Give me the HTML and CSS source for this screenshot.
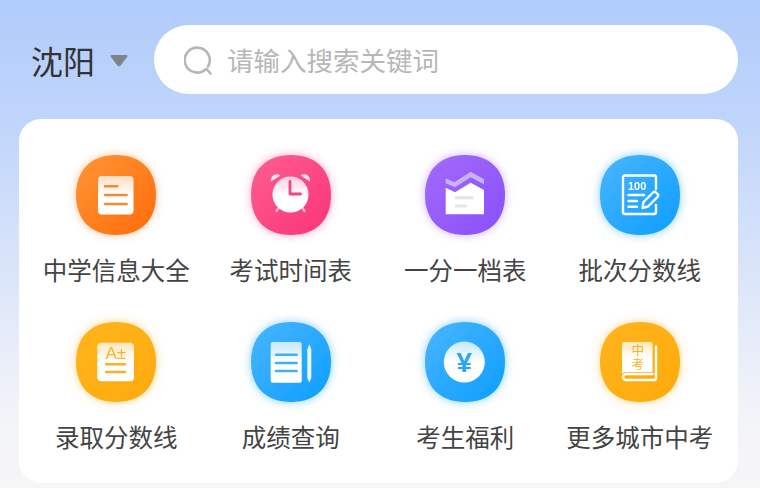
FILE: index.html
```html
<!DOCTYPE html>
<html lang="zh-CN">
<head>
  <meta charset="UTF-8" />
  <meta name="viewport" content="width=device-width, initial-scale=1.0"/>
  <title>中考</title>
  <link rel="stylesheet" href="styles.css">
</head>
<body>

  <!-- shared gradients for the badges -->
  <svg class="defs" width="0" height="0">
    <defs>
      <linearGradient id="gOrange" x1="0" y1="0" x2="1" y2="1"><stop offset="0" stop-color="#ff9635"/><stop offset="1" stop-color="#ff6a0a"/></linearGradient>
      <linearGradient id="gPink" x1="0" y1="0" x2="1" y2="1"><stop offset="0" stop-color="#fd5f8e"/><stop offset="1" stop-color="#fb3379"/></linearGradient>
      <linearGradient id="gPurple" x1="0" y1="0" x2="1" y2="1"><stop offset="0" stop-color="#a26bfb"/><stop offset="1" stop-color="#8a4ffb"/></linearGradient>
      <linearGradient id="gBlue" x1="0" y1="0" x2="1" y2="1"><stop offset="0" stop-color="#4ab5ff"/><stop offset="1" stop-color="#0c9eff"/></linearGradient>
      <linearGradient id="gYellow" x1="0" y1="0" x2="1" y2="1"><stop offset="0" stop-color="#ffb41c"/><stop offset="1" stop-color="#ffaa0c"/></linearGradient>
      <linearGradient id="gPage" x1="0" y1="0" x2="0" y2="1"><stop offset="0" stop-color="#fff" stop-opacity=".72"/><stop offset=".5" stop-color="#fff"/></linearGradient>
    </defs>
  </svg>

  <header class="top">
    <div class="city">
      <span>沈阳</span>
      <svg class="caret" width="18" height="12" viewBox="0 0 18 12"><path d="M2 0H16Q18.500 0 17 2L11 10Q9 12.500 7 10L1 2Q-.5 0 2 0Z"/></svg>
    </div>
    <div class="search">
      <svg class="search-icon" width="30" height="32" viewBox="0 0 30 32">
        <path d="M21.500 24.500A12.500 12.500 0 1 1 24 21.500"/>
        <path d="M22.500 24l4 4.500"/>
      </svg>
      <span>请输入搜索关键词</span>
    </div>
  </header>

  <main class="card">
    <a class="tile">
      <svg class="badge glow-orange" width="80" height="80" viewBox="0 0 80 80">
        <path fill="url(#gOrange)" d="M40 0C65 0 80 15 80 40C80 65 65 80 40 80C15 80 0 65 0 40C0 15 15 0 40 0Z"/>
        <rect x="22" y="21" width="35.500" height="38.500" rx="4" fill="url(#gPage)"/>
        <path class="ln" stroke="#f58a35" d="M29 31.300h12.500M29 40h21.700M29 49h21.700"/>
      </svg>
      <span>中学信息大全</span>
    </a>
    <a class="tile">
      <svg class="badge glow-pink" width="80" height="80" viewBox="0 0 80 80">
        <path fill="url(#gPink)" d="M40 0C65 0 80 15 80 40C80 65 65 80 40 80C15 80 0 65 0 40C0 15 15 0 40 0Z"/>
        <path fill="#fff" fill-opacity=".85" d="M20 26.500C19 21 25 17 29.500 20.500ZM49.500 20.500C54 17 60 21 59 26.500Z"/>
        <path class="ln" stroke="#ffb1c8" d="M27.500 53l-2 3M51.500 53l2 3"/>
        <circle cx="39.500" cy="39.500" r="18" fill="url(#gPage)"/>
        <path class="ln-hand" d="M39 26.500V39H49.500"/>
      </svg>
      <span>考试时间表</span>
    </a>
    <a class="tile">
      <svg class="badge glow-purple" width="80" height="80" viewBox="0 0 80 80">
        <path fill="url(#gPurple)" d="M40 0C65 0 80 15 80 40C80 65 65 80 40 80C15 80 0 65 0 40C0 15 15 0 40 0Z"/>
        <path fill="#c6b2f5" d="M20.700 23.300L29.300 27.300L45.700 16.700L59 24.300V29.300L45.700 22.300L30 32.300L20.700 28.300Z"/>
        <path fill="#fff" d="M20.700 32.700L30 37.300L45.700 27.700L59 35V59.300H20.700Z"/>
        <path class="ln-flat" d="M30 42.700H48.300M30 51H41.700"/>
      </svg>
      <span>一分一档表</span>
    </a>
    <a class="tile">
      <svg class="badge glow-blue" width="80" height="80" viewBox="0 0 80 80">
        <path fill="url(#gBlue)" d="M40 0C65 0 80 15 80 40C80 65 65 80 40 80C15 80 0 65 0 40C0 15 15 0 40 0Z"/>
        <path class="ln-w" d="M56 34V22.500a2 2 0 0 0-2-2H25a2 2 0 0 0-2 2V57a2 2 0 0 0 2 2H54a2 2 0 0 0 2-2V50"/>
        <text class="t-100" x="28" y="34.500">100</text>
        <path class="ln-w" d="M28.500 40H44M28.500 46H37M28.500 51.700H37"/>
        <path class="ln-w" d="M43.500 47L53 37.500a2 2 0 0 1 3 0l1.500 1.500a2 2 0 0 1 0 3L48 51.500L42.500 53Z"/>
      </svg>
      <span>批次分数线</span>
    </a>
    <a class="tile">
      <svg class="badge glow-yellow" width="80" height="80" viewBox="0 0 80 80">
        <path fill="url(#gYellow)" d="M40 0C65 0 80 15 80 40C80 65 65 80 40 80C15 80 0 65 0 40C0 15 15 0 40 0Z"/>
        <rect x="21.300" y="20.700" width="36.700" height="38.600" rx="4" fill="url(#gPage)"/>
        <text class="t-grade" x="29.500" y="36.500">A±</text>
        <path class="ln" stroke="#fdb022" d="M30 42.300H49M30 50H49"/>
      </svg>
      <span>录取分数线</span>
    </a>
    <a class="tile">
      <svg class="badge glow-blue" width="80" height="80" viewBox="0 0 80 80">
        <path fill="url(#gBlue)" d="M40 0C65 0 80 15 80 40C80 65 65 80 40 80C15 80 0 65 0 40C0 15 15 0 40 0Z"/>
        <rect x="19.700" y="20" width="31" height="40.700" rx="2" fill="url(#gPage)"/>
        <path class="ln" stroke="#42aef5" d="M25 32.700H45.700M25 41H45.700M25 49H45.700"/>
        <path fill="#fff" fill-opacity=".9" d="M56.300 27.500L58.300 22.300L60.300 27.500V56L58.300 60.500L56.300 56Z"/>
      </svg>
      <span>成绩查询</span>
    </a>
    <a class="tile">
      <svg class="badge glow-blue" width="80" height="80" viewBox="0 0 80 80">
        <path fill="url(#gBlue)" d="M40 0C65 0 80 15 80 40C80 65 65 80 40 80C15 80 0 65 0 40C0 15 15 0 40 0Z"/>
        <circle cx="39.300" cy="40" r="20.500" fill="url(#gPage)"/>
        <text class="t-yen" x="39.300" y="50">¥</text>
      </svg>
      <span>考生福利</span>
    </a>
    <a class="tile">
      <svg class="badge glow-yellow" width="80" height="80" viewBox="0 0 80 80">
        <path fill="url(#gYellow)" d="M40 0C65 0 80 15 80 40C80 65 65 80 40 80C15 80 0 65 0 40C0 15 15 0 40 0Z"/>
        <path fill="url(#gPage)" d="M24 20H50.500a2 2 0 0 1 2 2V50H26a4 4 0 0 0-4 2V22a2 2 0 0 1 2-2Z"/>
        <path class="ln-w" d="M56 24.500V56.500a1.500 1.500 0 0 1-1.500 1.500H26a2.800 2.800 0 0 1-2.800-2.800V55a3 3 0 0 1 3-3H52.500"/>
        <text class="t-book" x="37.700" y="35.500">中考</text>
      </svg>
      <span>更多城市中考</span>
    </a>
  </main>

</body>
</html>
```

FILE: styles.css
```css
body {
  margin: 0;
  height: 488px;
  overflow: hidden;
  background: linear-gradient(180deg, #b0ccfb 0%, #c0d5fb 25%, #f3f4f8 85%, #f6f6f7 100%);
  font-family: "Noto Sans CJK SC", "Noto Sans", sans-serif;
}
.defs {
  display: block;
}
.top {
  display: flex;
  align-items: center;
  padding: 25px 22px 25px 31px;
}
.city {
  display: flex;
  align-items: center;
  gap: 15px;
  font-size: 32px;
  color: #333;
}
.caret {
  margin-top: 3px;
  fill: #808488;
}
.search {
  display: flex;
  align-items: center;
  gap: 13px;
  box-sizing: border-box;
  width: 584px;
  height: 69px;
  margin-left: auto;
  padding-left: 30px;
  background: #fff;
  border-radius: 35px;
  font-size: 26.500px;
  color: #b7b7b7;
}
.search-icon {
  margin-top: 2px;
  fill: none;
  stroke: #b7b7b7;
  stroke-width: 2.600;
  stroke-linecap: round;
}
.card {
  display: grid;
  grid-template-columns: repeat(4, 1fr);
  row-gap: 37px;
  margin: 0 22px 0 19px;
  padding: 36px 11px 31px 10px;
  background: #fff;
  border-radius: 22px;
}
.tile {
  display: flex;
  flex-direction: column;
  align-items: center;
  gap: 20px;
  font-size: 24.500px;
  line-height: 30px;
  color: #444;
}
.badge {
  overflow: visible;
}
.glow-orange { filter: drop-shadow(0 0 5px rgba(255, 130, 40, 0.45)); }
.glow-pink { filter: drop-shadow(0 0 5px rgba(252, 70, 125, 0.45)); }
.glow-purple { filter: drop-shadow(0 0 5px rgba(150, 90, 250, 0.45)); }
.glow-blue { filter: drop-shadow(0 0 5px rgba(40, 170, 255, 0.55)); }
.glow-yellow { filter: drop-shadow(0 0 5px rgba(255, 175, 25, 0.5)); }
.ln {
  fill: none;
  stroke-width: 2.400;
  stroke-linecap: round;
}
.ln-w {
  fill: none;
  stroke: #fff;
  stroke-width: 2.400;
  stroke-linecap: round;
  stroke-linejoin: round;
}
.ln-hand {
  fill: none;
  stroke: #f9427f;
  stroke-width: 2.800;
  stroke-linecap: round;
  stroke-linejoin: round;
}
.ln-flat {
  fill: none;
  stroke: #e4e4e8;
  stroke-width: 3;
}
.t-100 {
  font-family: "Liberation Sans", sans-serif;
  font-size: 11px;
  font-weight: 700;
  fill: #fff;
}
.t-grade {
  font-family: "Liberation Sans", sans-serif;
  font-size: 17px;
  fill: #fdb022;
}
.t-yen {
  font-family: "Liberation Sans", sans-serif;
  font-size: 28px;
  font-weight: 700;
  fill: #2aa5fb;
  text-anchor: middle;
}
.t-book {
  font-size: 12.500px;
  letter-spacing: 1px;
  writing-mode: vertical-rl;
  fill: #fdae1f;
  text-anchor: middle;
}
```
